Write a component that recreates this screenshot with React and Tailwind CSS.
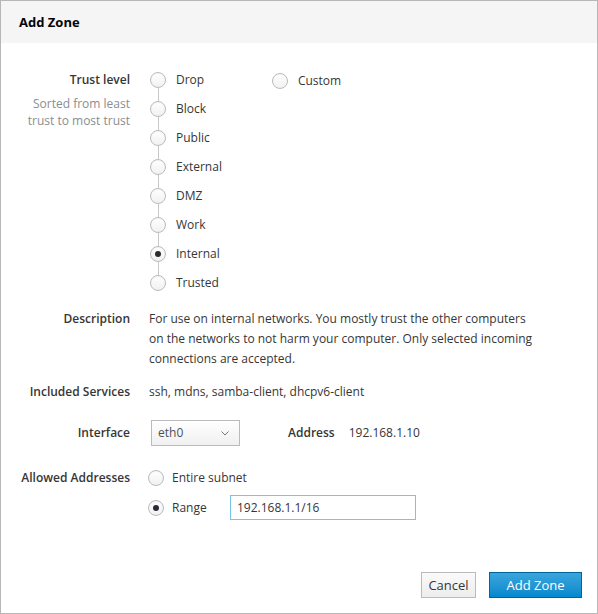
import React from 'react';

const trustLevels = ['Drop', 'Block', 'Public', 'External', 'DMZ', 'Work', 'Internal', 'Trusted'];

// Radio circle in the PatternFly look
const Radio = ({ checked }) => (
  <span className="w-4 h-4 shrink-0 rounded-full border border-[#bbb] bg-gradient-to-b from-white to-[#f1f1f1] flex items-center justify-center shadow-[inset_0_1px_1px_rgba(0,0,0,0.04)]">
    {checked && <span className="w-[6px] h-[6px] rounded-full bg-[#292e34]"></span>}
  </span>
);

const Label = ({ children, className = '' }) => (
  <div className={`text-right font-semibold text-[#363636] ${className}`}>{children}</div>
);

function TrustList() {
  return (
    <div className="flex flex-col">
      {trustLevels.map((name, i) => (
        <div key={name} className="flex items-center h-[28.9px]">
          <div className="w-4 h-full flex flex-col items-center">
            <span className={`flex-1 w-px ${i === 0 ? 'bg-transparent' : 'bg-[#c8c8c8]'}`}></span>
            <Radio checked={name === 'Internal'} />
            <span className={`flex-1 w-px ${i === trustLevels.length - 1 ? 'bg-transparent' : 'bg-[#c8c8c8]'}`}></span>
          </div>
          <span className="ml-[10px] text-[#363636]">{name}</span>
        </div>
      ))}
    </div>
  );
}

export default function App() {
  return (
    <div
      className="w-[598px] h-[614px] border border-[#b7b7b7] bg-white flex flex-col text-[12px] leading-[20px] text-[#363636]"
      style={{ fontFamily: '"Open Sans", "Noto Sans", sans-serif' }}
    >
      <div className="h-[42px] shrink-0 bg-[#f5f5f5] px-[18px] flex items-center">
        <h1 className="text-[13px] font-bold text-[#030303]">Add Zone</h1>
      </div>

      <div className="flex-1 pt-[23px] pl-[17px] grid grid-cols-[112px_1fr] gap-x-[19px] content-start">
        {/* Trust level */}
        <div className="pt-[4px]">
          <Label>Trust level</Label>
          <div className="text-right text-[#8b8d8f] mt-[5px] leading-[17px]">
            Sorted from least
            <br />
            trust to most trust
          </div>
        </div>
        <div className="flex pl-px">
          <TrustList />
          <div className="ml-[50px] flex items-center h-[29px] self-start pt-[1px]">
            <Radio />
            <span className="ml-[10px]">Custom</span>
          </div>
        </div>

        {/* Description */}
        <Label className="mt-[12px]">Description</Label>
        <p className="mt-[12px] w-[390px]">
          For use on internal networks. You mostly trust the other computers on the networks to not harm your
          computer. Only selected incoming connections are accepted.
        </p>

        {/* Services */}
        <Label className="mt-[13px]">Included Services</Label>
        <div className="mt-[13px]">ssh, mdns, samba-client, dhcpv6-client</div>

        {/* Interface */}
        <Label className="mt-[21px]">Interface</Label>
        <div className="mt-[18px] flex items-center">
          <div className="ml-[2px] w-[89px] h-[26px] border border-[#bbb] bg-gradient-to-b from-white to-[#f0f0f0] flex items-center justify-between pl-[6px] pr-[10px] text-[#4d5258]">
            <span>eth0</span>
            <svg width="8" height="5" viewBox="0 0 8 5" fill="none">
              <path d="M0.5 0.5 L4 4 L7.5 0.5" stroke="#72767b" strokeWidth="1" />
            </svg>
          </div>
          <span className="ml-[48px] font-semibold">Address</span>
          <span className="ml-[14px]">192.168.1.10</span>
        </div>

        {/* Allowed addresses */}
        <Label className="mt-[22px]">Allowed Addresses</Label>
        <div className="mt-[19px] -ml-[1px] flex flex-col">
          <div className="flex items-center h-[25px]">
            <Radio />
            <span className="ml-[8px]">Entire subnet</span>
          </div>
          <div className="flex items-center h-[25px] mt-[5px]">
            <Radio checked />
            <span className="ml-[8px] w-[58px]">Range</span>
            <div className="w-[186px] h-[25px] border border-[#7dc3e8] px-[6px] flex items-center">
              192.168.1.1/16
            </div>
          </div>
        </div>
      </div>

      <div className="flex justify-end gap-[13px] pr-[15px] pb-[15px]">
        <button className="h-[26px] w-[55px] border border-[#bbb] bg-gradient-to-b from-[#fafafa] to-[#ededed] text-[#363636] text-[13px]">
          Cancel
        </button>
        <button className="h-[26px] w-[93px] border border-[#00659c] bg-gradient-to-b from-[#39a5dc] to-[#0088ce] text-white text-[13px]">
          Add Zone
        </button>
      </div>
    </div>
  );
}
